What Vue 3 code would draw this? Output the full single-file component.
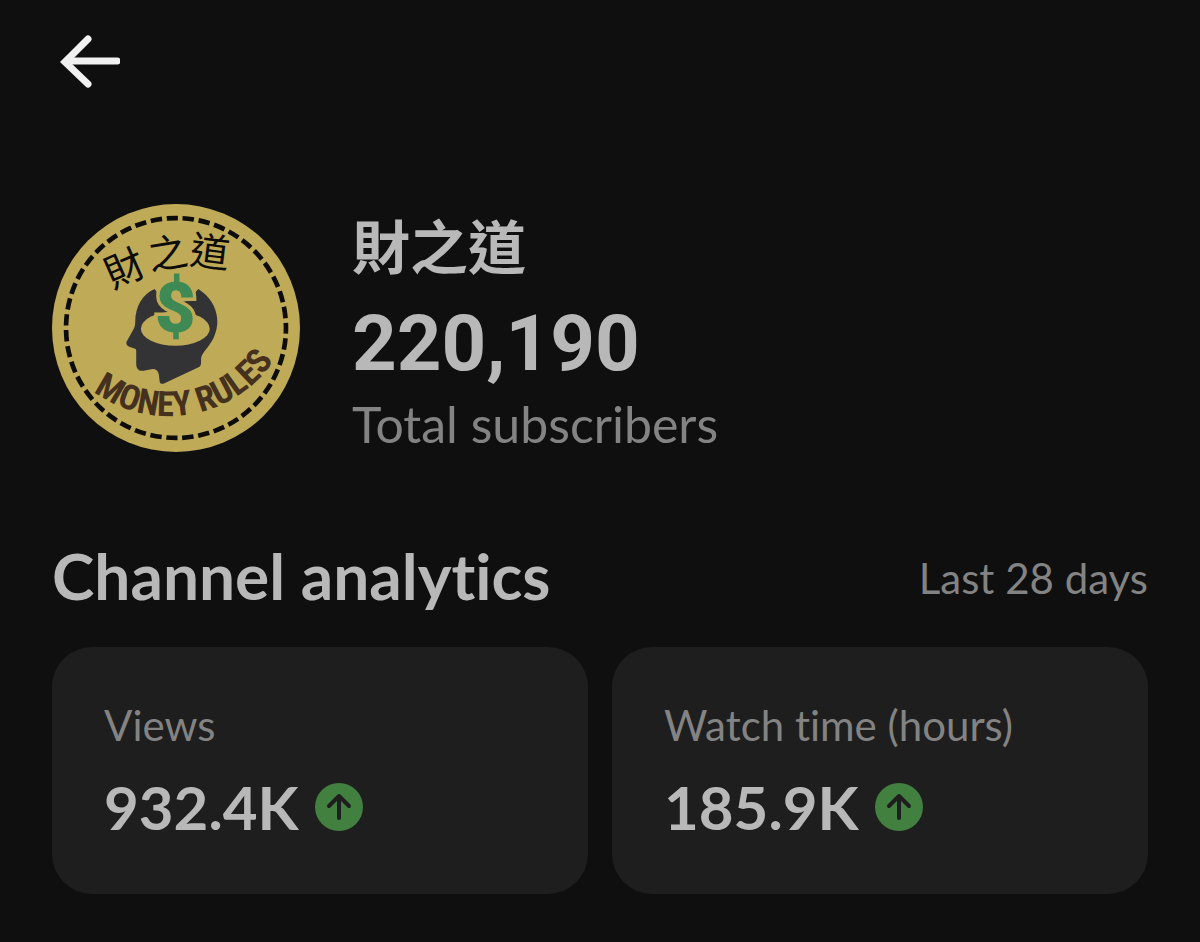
<script setup>
const channel = {
  name: '財之道',
  subscribers: '220,190'
}

const stats = [
  { label: 'Views', value: '932.4K' },
  { label: 'Watch time (hours)', value: '185.9K' }
]
</script>

<template>
  <main class="page">
    <header class="topbar">
      <button class="back" type="button" aria-label="Back">
        <svg viewBox="0 0 60 54" width="60" height="54">
          <path d="M28 4 5 27l23 22" />
          <path d="M10 26h47" />
        </svg>
      </button>
    </header>

    <section class="channel">
      <svg class="avatar" viewBox="36 28 742 742" role="img" aria-label="Money Rules">
        <circle cx="407" cy="399" r="371" fill="#bfab57" />
        <circle class="stitch" cx="407" cy="399" r="329" pathLength="2064" />

        <g class="han">
          <text transform="translate(254 221) rotate(-24)" y="42">財</text>
          <text transform="translate(382 176) rotate(-9)" y="42">之</text>
          <text transform="translate(509 172) rotate(7)" y="42">道</text>
        </g>

        <path
          fill="#333235"
          d="M343 282C306 298 285 336 285 380C285 396 280 402 274 413L259 440C257 446 260 452 267 455L285 461C289 463 288 468 288 474V506C288 524 298 530 314 526L337 522C349 522 355 530 356 541L358 558C359 565 364 568 371 565L476 516C481 513 482 508 482 501V489C485 473 507 455 519 430C529 407 532 388 530 369C527 335 508 304 474 282L440 318L380 330Z"
        />
        <ellipse cx="405" cy="401" rx="103" ry="51" fill="#bfab57" />
        <text class="dollar" x="405" y="412">$</text>

        <path id="motto-arc" d="M160 589A381 381 0 0 0 740 420" fill="none" />
        <text class="motto"><textPath href="#motto-arc">MONEY RULES</textPath></text>
      </svg>

      <div class="channel-info">
        <h1 class="name">{{ channel.name }}</h1>
        <p class="count">{{ channel.subscribers }}</p>
        <p class="caption">Total subscribers</p>
      </div>
    </section>

    <section class="analytics">
      <div class="analytics-head">
        <h2>Channel analytics</h2>
        <span class="period">Last 28 days</span>
      </div>
      <div class="cards">
        <article v-for="stat in stats" :key="stat.label" class="card">
          <p class="label">{{ stat.label }}</p>
          <p class="value">
            {{ stat.value }}
            <svg class="trend" viewBox="0 0 48 48" role="img" aria-label="Up">
              <circle cx="24" cy="24" r="24" />
              <path d="M24 35V13M14 23l10-10 10 10" />
            </svg>
          </p>
        </article>
      </div>
    </section>
  </main>
</template>

<style>
body {
  margin: 0;
  background: #0f0f0f;
}
</style>

<style scoped>
.page {
  padding: 32px 52px 48px;
  color: #b8b8b8;
  font-family: Lato, "Noto Sans CJK TC", sans-serif;
  font-variant-ligatures: none;
}

h1,
h2,
p {
  margin: 0;
}

.topbar {
  display: flex;
  padding-left: 8px;
}

.back {
  display: flex;
  padding: 3px 0;
  border: 0;
  background: none;
  cursor: pointer;
}

.back path {
  fill: none;
  stroke: #f1f1f1;
  stroke-width: 7;
  stroke-linecap: round;
}

.channel {
  display: flex;
  align-items: flex-start;
  gap: 52px;
  margin-top: 112px;
}

.avatar {
  flex: none;
  width: 248px;
  height: 248px;
}

.stitch {
  fill: none;
  stroke: #0d0c08;
  stroke-width: 14;
  stroke-dasharray: 34 14;
  stroke-dashoffset: 17;
}

.han {
  fill: #0d0c08;
  font-family: "Noto Sans CJK TC", sans-serif;
  font-size: 118px;
  font-weight: 400;
  text-anchor: middle;
}

.dollar {
  fill: #3f8a54;
  stroke: #bfab57;
  stroke-width: 20;
  paint-order: stroke;
  font-family: Roboto, sans-serif;
  font-size: 212px;
  font-weight: 900;
  text-anchor: middle;
}

.motto {
  fill: #46311f;
  font-family: "Roboto Condensed", "Open Sans Condensed", "Noto Sans Condensed", Roboto, sans-serif;
  font-size: 104px;
  font-weight: 700;
}

.name {
  font-family: "Noto Sans CJK TC", sans-serif;
  font-size: 58px;
  font-weight: 700;
  line-height: 80px;
}

.count {
  font-family: Roboto, sans-serif;
  font-size: 78px;
  font-weight: 700;
  line-height: 120px;
}

.caption {
  color: #838383;
  font-size: 50px;
  line-height: 40px;
}

.analytics {
  margin-top: 88px;
}

.analytics-head {
  display: flex;
  align-items: center;
  justify-content: space-between;
}

h2 {
  font-size: 64px;
  font-weight: 700;
  line-height: 72px;
}

.period,
.label {
  color: #838383;
  font-size: 42px;
  line-height: 48px;
}

.period {
  padding-top: 4px;
}

.cards {
  display: grid;
  grid-template-columns: 1fr 1fr;
  gap: 24px;
  margin-top: 35px;
}

.card {
  padding: 54px 52px 51px;
  border-radius: 40px;
  background: #1e1e1e;
}

.value {
  display: flex;
  align-items: center;
  gap: 16px;
  margin-top: 22px;
  font-size: 60px;
  font-weight: 700;
  line-height: 72px;
}

.trend {
  width: 48px;
  height: 48px;
}

.trend circle {
  fill: #428040;
}

.trend path {
  fill: none;
  stroke: #1e1e1e;
  stroke-width: 4;
  stroke-linecap: round;
  stroke-linejoin: round;
}
</style>
